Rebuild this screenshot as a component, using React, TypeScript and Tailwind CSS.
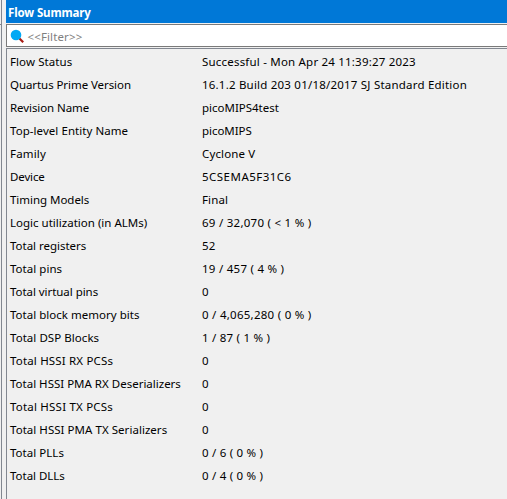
type Row = { label: string; labelTracking: string; value: string; valueTracking: string };

const rows: Row[] = [
  { label: 'Flow Status', labelTracking: 'tracking-[0.09px]', value: 'Successful - Mon Apr 24 11:39:27 2023', valueTracking: 'tracking-[0.2px]' },
  { label: 'Quartus Prime Version', labelTracking: 'tracking-[-0.07px]', value: '16.1.2 Build 203 01/18/2017 SJ Standard Edition', valueTracking: 'tracking-[0.21px]' },
  { label: 'Revision Name', labelTracking: 'tracking-[-0.08px]', value: 'picoMIPS4test', valueTracking: 'tracking-[-0.01px]' },
  { label: 'Top-level Entity Name', labelTracking: 'tracking-[0.06px]', value: 'picoMIPS', valueTracking: 'tracking-[-0.05px]' },
  { label: 'Family', labelTracking: 'tracking-[0.17px]', value: 'Cyclone V', valueTracking: 'tracking-[0.15px]' },
  { label: 'Device', labelTracking: 'tracking-[-0.13px]', value: '5CSEMA5F31C6', valueTracking: 'tracking-[0.48px]' },
  { label: 'Timing Models', labelTracking: 'tracking-[-0.03px]', value: 'Final', valueTracking: 'tracking-[0.12px]' },
  { label: 'Logic utilization (in ALMs)', labelTracking: 'tracking-[0.01px]', value: '69 / 32,070 ( < 1 % )', valueTracking: 'tracking-[0.26px]' },
  { label: 'Total registers', labelTracking: 'tracking-[-0.02px]', value: '52', valueTracking: 'tracking-[0.1px]' },
  { label: 'Total pins', labelTracking: 'tracking-[0.03px]', value: '19 / 457 ( 4 % )', valueTracking: 'tracking-[0.26px]' },
  { label: 'Total virtual pins', labelTracking: 'tracking-[-0.05px]', value: '0', valueTracking: 'tracking-normal' },
  { label: 'Total block memory bits', labelTracking: 'tracking-[0.02px]', value: '0 / 4,065,280 ( 0 % )', valueTracking: 'tracking-[0.26px]' },
  { label: 'Total DSP Blocks', labelTracking: 'tracking-[0.05px]', value: '1 / 87 ( 1 % )', valueTracking: 'tracking-[0.23px]' },
  { label: 'Total HSSI RX PCSs', labelTracking: 'tracking-[0.17px]', value: '0', valueTracking: 'tracking-normal' },
  { label: 'Total HSSI PMA RX Deserializers', labelTracking: 'tracking-normal', value: '0', valueTracking: 'tracking-normal' },
  { label: 'Total HSSI TX PCSs', labelTracking: 'tracking-[0.21px]', value: '0', valueTracking: 'tracking-normal' },
  { label: 'Total HSSI PMA TX Serializers', labelTracking: 'tracking-[0.04px]', value: '0', valueTracking: 'tracking-normal' },
  { label: 'Total PLLs', labelTracking: 'tracking-[0.03px]', value: '0 / 6 ( 0 % )', valueTracking: 'tracking-[0.22px]' },
  { label: 'Total DLLs', labelTracking: 'tracking-[-0.02px]', value: '0 / 4 ( 0 % )', valueTracking: 'tracking-[0.22px]' },
];

function SearchIcon() {
  return (
    <svg className="ml-[3px] mt-[4px] h-[15px] w-[15px] shrink-0" viewBox="0 0 15 15">
      <path d="M9 9 L13.2 13.2" stroke="#a81c14" strokeWidth="2.2" />
      <circle cx="6" cy="6" r="5.3" fill="#03a9f4" />
    </svg>
  );
}

export default function App() {
  return (
    <div className="flex h-[499px] w-[507px] overflow-hidden bg-[#f0f0f0] font-['Noto_Sans','Open_Sans',sans-serif] text-[11.5px] text-black">
      <div className="w-[2px] shrink-0 border-r border-[#828790]">
        <div className="h-[25px] border-b border-[#828790]" />
      </div>
      <div className="ml-[4px] flex min-w-0 grow flex-col">
        <div className="h-[23px] shrink-0 bg-[#0078d7] pl-[2px] font-bold leading-[26px] tracking-[-0.13px] text-white">Flow Summary</div>
        <div className="mt-px flex h-[23px] shrink-0 border-y border-l border-[#7a7a7a] bg-white">
          <SearchIcon />
          <span className="ml-[2.5px] leading-[23px] tracking-[0.13px] text-[#7f7f7f]">&lt;&lt;Filter&gt;&gt;</span>
        </div>
        <div className="mt-px grow border-l border-t border-[#828790] pl-[3px] pt-px">
          {rows.map((row) => (
            <div key={row.label} className="flex h-[23px] whitespace-pre leading-[23px]">
              <span className={`w-[192px] shrink-0 ${row.labelTracking}`}>{row.label}</span>
              <span className={row.valueTracking}>{row.value}</span>
            </div>
          ))}
        </div>
      </div>
    </div>
  );
}
